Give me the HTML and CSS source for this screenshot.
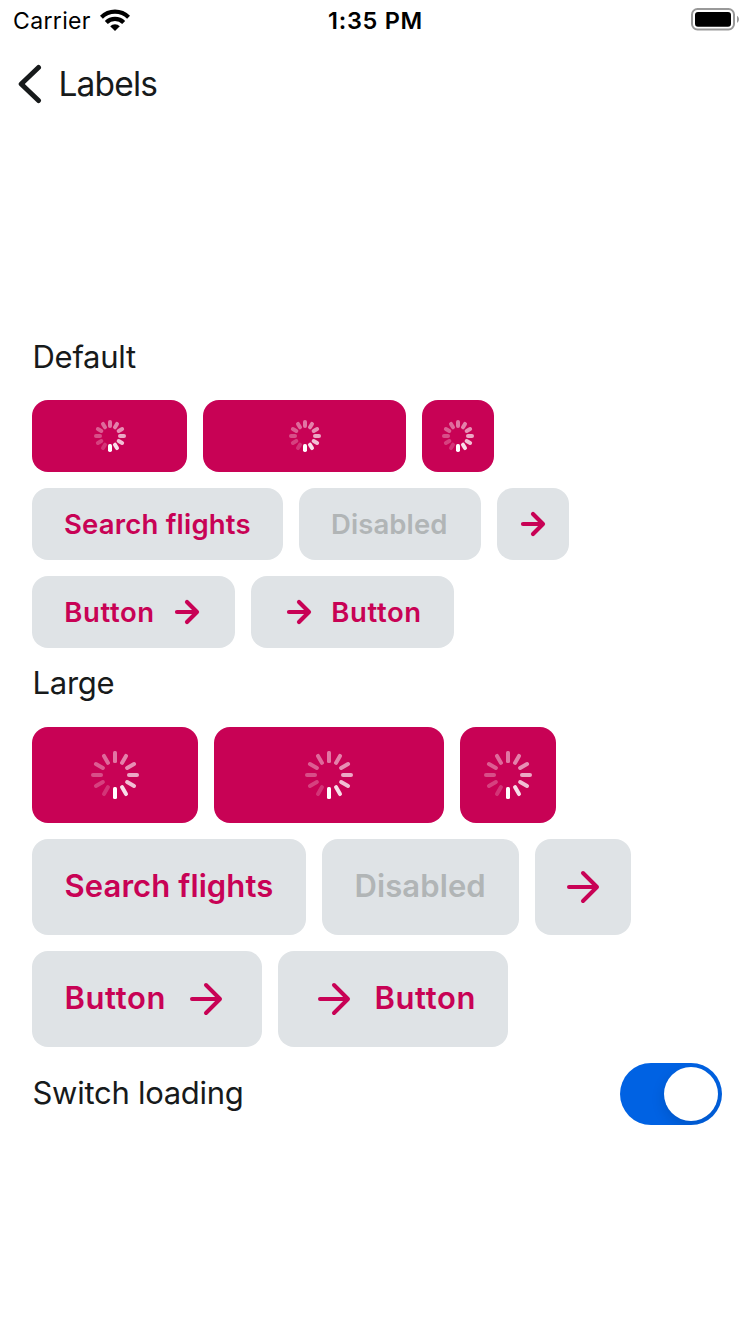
FILE: index.html
```html
<!DOCTYPE html>
<html lang="en">
<head>
<meta charset="utf-8">
<title>Labels</title>
<link rel="stylesheet" href="styles.css">
</head>
<body>
<svg class="defs" aria-hidden="true">
  <symbol id="arrow-sm" viewBox="0 0 24 24" overflow="visible"><path d="M2 12H21M12 2l10 10-10 10" fill="none" stroke="currentColor" stroke-width="4.2" stroke-linecap="round" stroke-linejoin="round"/></symbol>
  <symbol id="arrow-lg" viewBox="0 0 32 32" overflow="visible"><path d="M2 16H29M16 2l14 14-14 14" fill="none" stroke="currentColor" stroke-width="4" stroke-linecap="round" stroke-linejoin="round"/></symbol>
  <symbol id="spin-sm" viewBox="-16 -16 32 32"><g fill="#fff">
    <rect x="-2" y="8" width="4" height="8" rx="1.7"/>
    <rect x="-2" y="8" width="4" height="8" rx="2" transform="rotate(30)" opacity=".2"/>
    <rect x="-2" y="8" width="4" height="8" rx="2" transform="rotate(60)" opacity=".25"/>
    <rect x="-2" y="8" width="4" height="8" rx="2" transform="rotate(90)" opacity=".3"/>
    <rect x="-2" y="8" width="4" height="8" rx="2" transform="rotate(120)" opacity=".36"/>
    <rect x="-2" y="8" width="4" height="8" rx="2" transform="rotate(150)" opacity=".41"/>
    <rect x="-2" y="8" width="4" height="8" rx="2" transform="rotate(180)" opacity=".46"/>
    <rect x="-2" y="8" width="4" height="8" rx="2" transform="rotate(210)" opacity=".5"/>
    <rect x="-2" y="8" width="4" height="8" rx="2" transform="rotate(240)" opacity=".56"/>
    <rect x="-2" y="8" width="4" height="8" rx="2" transform="rotate(270)" opacity=".66"/>
    <rect x="-2" y="8" width="4" height="8" rx="2" transform="rotate(300)" opacity=".75"/>
    <rect x="-2" y="8" width="4" height="8" rx="2" transform="rotate(330)" opacity=".87"/>
  </g></symbol>
  <symbol id="spin-lg" viewBox="-24 -24 48 48"><g fill="#fff">
    <rect x="-2" y="12" width="4" height="12" rx="1.5"/>
    <rect x="-2" y="12" width="4" height="12" rx="2" transform="rotate(30)" opacity=".2"/>
    <rect x="-2" y="12" width="4" height="12" rx="2" transform="rotate(60)" opacity=".25"/>
    <rect x="-2" y="12" width="4" height="12" rx="2" transform="rotate(90)" opacity=".3"/>
    <rect x="-2" y="12" width="4" height="12" rx="2" transform="rotate(120)" opacity=".36"/>
    <rect x="-2" y="12" width="4" height="12" rx="2" transform="rotate(150)" opacity=".41"/>
    <rect x="-2" y="12" width="4" height="12" rx="1.5" transform="rotate(180)" opacity=".46"/>
    <rect x="-2" y="12" width="4" height="12" rx="2" transform="rotate(210)" opacity=".5"/>
    <rect x="-2" y="12" width="4" height="12" rx="2" transform="rotate(240)" opacity=".56"/>
    <rect x="-2" y="12" width="4" height="12" rx="2" transform="rotate(270)" opacity=".66"/>
    <rect x="-2" y="12" width="4" height="12" rx="2" transform="rotate(300)" opacity=".75"/>
    <rect x="-2" y="12" width="4" height="12" rx="2" transform="rotate(330)" opacity=".87"/>
  </g></symbol>
</svg>

<header class="status">
  <div class="carrier"><span>Carrier</span>
    <svg class="wifi" viewBox="0 0 30 22" width="30" height="22"><g fill="none" stroke="#000" stroke-width="4.2"><path d="M1.4 8.2a19.2 19.2 0 0 1 27.2 0"/><path d="M6.3 13.5a12.3 12.3 0 0 1 17.4 0"/></g><path d="M15 22l-4.8-4.8a6.8 6.8 0 0 1 9.6 0z"/></svg>
  </div>
  <time class="clock">1:35 PM</time>
  <svg class="battery" viewBox="0 0 50 24" width="50" height="24"><rect x="2" y="2" width="42" height="20.5" rx="5.5" fill="none" stroke="#999" stroke-width="2"/><rect x="5" y="5" width="36" height="14.8" rx="3" fill="#000"/><path d="M47 8.7c2.6 1.4 2.6 5.7 0 7.1z" fill="#999"/></svg>
</header>

<nav class="nav">
  <svg class="back" viewBox="0 0 24 40" width="24" height="40"><path d="M20.5 3.5L3.2 20l17.3 16.5" fill="none" stroke="#171a1b" stroke-width="5" stroke-linecap="round" stroke-linejoin="round"/></svg>
  <h1 class="title">Labels</h1>
</nav>

<main class="content">
  <section class="group">
    <h2 class="label">Default</h2>
    <div class="row">
      <button class="btn loading w155"><svg class="spin"><use href="#spin-sm"/></svg></button>
      <button class="btn loading w203"><svg class="spin"><use href="#spin-sm"/></svg></button>
      <button class="btn loading w72"><svg class="spin"><use href="#spin-sm"/></svg></button>
    </div>
    <div class="row">
      <button class="btn w251"><span class="search">Search flights</span></button>
      <button class="btn w182" disabled><span class="off">Disabled</span></button>
      <button class="btn icon-only w72"><svg class="arrow"><use href="#arrow-sm"/></svg></button>
    </div>
    <div class="row">
      <button class="btn w203"><span class="word">Button</span><svg class="arrow trail"><use href="#arrow-sm"/></svg></button>
      <button class="btn w203"><svg class="arrow lead"><use href="#arrow-sm"/></svg><span class="word">Button</span></button>
    </div>
  </section>

  <section class="group large">
    <h2 class="label">Large</h2>
    <div class="row">
      <button class="btn loading w166"><svg class="spin"><use href="#spin-lg"/></svg></button>
      <button class="btn loading w230"><svg class="spin"><use href="#spin-lg"/></svg></button>
      <button class="btn loading w96"><svg class="spin"><use href="#spin-lg"/></svg></button>
    </div>
    <div class="row">
      <button class="btn w274"><span class="search">Search flights</span></button>
      <button class="btn w197" disabled><span class="off">Disabled</span></button>
      <button class="btn icon-only w96"><svg class="arrow"><use href="#arrow-lg"/></svg></button>
    </div>
    <div class="row">
      <button class="btn w230"><span class="word">Button</span><svg class="arrow trail"><use href="#arrow-lg"/></svg></button>
      <button class="btn w230"><svg class="arrow lead"><use href="#arrow-lg"/></svg><span class="word">Button</span></button>
    </div>
  </section>

  <div class="setting">
    <span class="label label-switch">Switch loading</span>
    <span class="switch" role="switch" aria-checked="true"><span class="knob"></span></span>
  </div>
</main>
</body>
</html>
```

FILE: styles.css
```css
* { box-sizing: border-box; }
body { margin: 0; width: 750px; height: 1334px; overflow: hidden; background: #fff; color: #171a1b; font-family: Inter, "Liberation Sans", sans-serif; }
svg { display: block; flex: none; }
.defs { position: absolute; width: 0; height: 0; }

.status { height: 40px; display: grid; grid-template-columns: 1fr auto 1fr; color: #000; line-height: 42px; }
.carrier { display: flex; padding-left: 13px; font-size: 23px; letter-spacing: .35px; }
.carrier span { width: 87px; white-space: nowrap; }
.wifi { margin-top: 9px; }
.clock { padding-left: 1px; font-size: 23.5px; font-weight: 580; letter-spacing: .7px; }
.battery { justify-self: end; margin: 7px 10px 0 0; }

.nav { height: 88px; display: flex; align-items: center; padding-left: 18px; }
.back { margin-right: 16.5px; }
.title { margin: 0; font-size: 33.5px; font-weight: 400; line-height: 40px; letter-spacing: -.85px; }

.content { padding: 209px 28px 0 32px; }
.group { display: flex; flex-direction: column; gap: 16px; margin-bottom: 16px; }
.label { margin: 0 0 8px .5px; font-size: 31px; font-weight: 400; line-height: 39px; white-space: nowrap; letter-spacing: -.28px; }
.large .label { line-height: 37px; margin-bottom: 10px; }
.row { display: flex; gap: 16px; }

.btn { display: flex; align-items: center; height: 72px; padding: 0 32px; border: 0; border-radius: 16px; background: #dfe3e6; color: #c80255; font: 600 27.5px/36px Inter, "Liberation Sans", sans-serif; white-space: nowrap; }
.btn:disabled { color: #b1b5b6; }
.loading, .icon-only { justify-content: center; padding: 0; }
.loading { background: #c80255; }
.spin { width: 32px; height: 32px; }
.arrow { width: 24px; height: 24px; overflow: visible; }
.search { letter-spacing: .2px; }
.off { letter-spacing: .1px; }
.word { width: 91px; letter-spacing: .6px; }
.trail { margin-left: 20px; }
.lead { margin: 0 20px 0 4px; }

.large .btn { height: 96px; font-size: 31px; }
.large .btn span { padding: 0 0 2px .5px; }
.large .spin { width: 48px; height: 48px; }
.large .arrow { width: 32px; height: 32px; }
.large .search { letter-spacing: .1px; }
.large .off { letter-spacing: .1px; }
.large .word { width: 102px; letter-spacing: .6px; }
.large .trail { margin-left: 24px; }
.large .lead { margin: 0 24px 0 8px; }

.w72 { width: 72px; } .w96 { width: 96px; } .w155 { width: 155px; } .w166 { width: 166px; }
.w182 { width: 182px; } .w197 { width: 197px; } .w203 { width: 203px; } .w230 { width: 230px; }
.w251 { width: 251px; } .w274 { width: 274px; }

.setting { display: flex; align-items: center; justify-content: space-between; height: 62px; }
.label-switch { margin-bottom: 3px; }
.switch { display: flex; justify-content: flex-end; width: 102px; height: 62px; padding: 4px; border-radius: 31px; background: #0062e3; overflow: hidden; }
.knob { width: 54px; height: 54px; border-radius: 50%; background: #fff; box-shadow: 0 5px 14px rgba(0, 0, 0, .13); }
```
